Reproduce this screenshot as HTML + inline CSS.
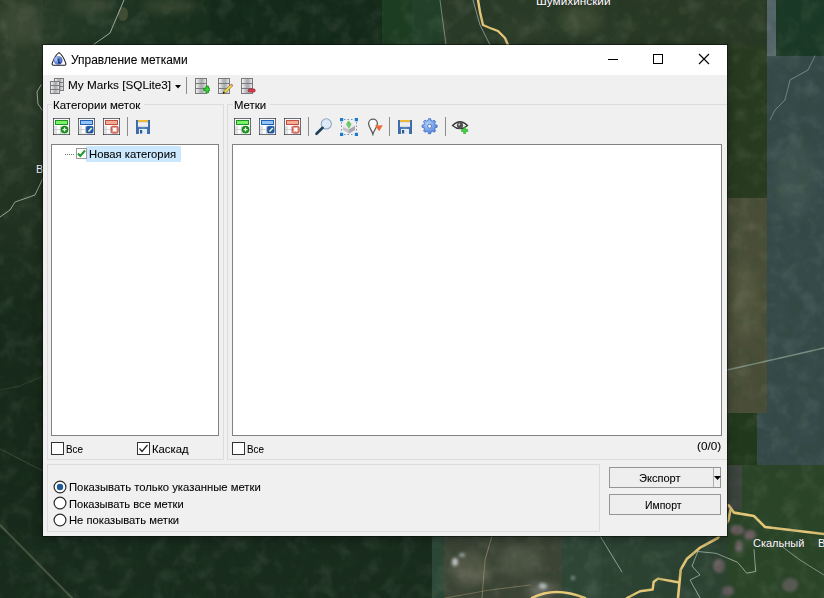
<!DOCTYPE html>
<html><head><meta charset="utf-8">
<style>
*{box-sizing:border-box}
html,body{margin:0;padding:0}
body{width:824px;height:598px;overflow:hidden;position:relative;background:#1d301e;font-family:"Liberation Sans",sans-serif;color:#000}
.a{position:absolute}
.t{position:absolute;white-space:nowrap;line-height:1;font-size:11.2px;color:#000;-webkit-text-stroke:0.08px #000}
.sep{position:absolute;width:1px;background:#8c8c8c}
</style></head><body>
<svg class="a" style="left:0;top:0" width="824" height="598" viewBox="0 0 824 598">
<defs>
<filter id="bl" x="-20%" y="-20%" width="140%" height="140%"><feGaussianBlur stdDeviation="4"/></filter>
<filter id="bl2" x="-50%" y="-50%" width="200%" height="200%"><feGaussianBlur stdDeviation="1.5"/></filter>
</defs>
<rect x="0" y="0" width="824" height="598" fill="#17291a"/>
<!-- top strip tiles -->
<linearGradient id="lgt" x1="0" y1="0" x2="1" y2="0"><stop offset="0" stop-color="#2c3e2a"/><stop offset="0.5" stop-color="#213624"/><stop offset="1" stop-color="#172c1b"/></linearGradient>
<rect x="0" y="0" width="210" height="45" fill="url(#lgt)"/>
<ellipse cx="123" cy="14" rx="5" ry="7" fill="#4a5238" opacity=".8"/>
<rect x="210" y="0" width="172" height="45" fill="#15291a"/>
<rect x="382" y="0" width="30" height="45" fill="#1d3d22"/>
<rect x="412" y="0" width="30" height="45" fill="#22402a"/>
<rect x="442" y="0" width="176" height="45" fill="#2a3a28"/>
<rect x="618" y="0" width="149" height="45" fill="#283824"/>
<rect x="767" y="0" width="9" height="56" fill="#56666a"/>
<rect x="776" y="0" width="48" height="56" fill="#1a3826"/>
<!-- right strip -->
<rect x="727" y="45" width="40" height="153" fill="#283a1f"/>
<rect x="767" y="56" width="57" height="414" fill="#364a4a"/>
<rect x="727" y="198" width="40" height="215" fill="#4a4e38"/>
<rect x="727" y="413" width="30" height="52" fill="#22381c"/>
<rect x="757" y="413" width="10" height="52" fill="#364a4a"/>
<rect x="727" y="465" width="97" height="133" fill="#2a4428"/>
<rect x="727" y="465" width="15" height="45" fill="#3e4440"/>
<!-- left strip -->
<linearGradient id="lgl" x1="0" y1="0" x2="0" y2="1"><stop offset="0" stop-color="#2e3e2a"/><stop offset="0.35" stop-color="#2a3a28"/><stop offset="1" stop-color="#17291a"/></linearGradient>
<rect x="0" y="0" width="43" height="320" fill="url(#lgl)"/>
<!-- bottom strip -->
<rect x="0" y="536" width="432" height="62" fill="#182b1c"/>
<rect x="432" y="536" width="12" height="62" fill="#2c4636"/>
<rect x="444" y="536" width="118" height="62" fill="#3c4436"/>
<rect x="562" y="536" width="40" height="62" fill="#2e4636"/>
<rect x="602" y="536" width="125" height="62" fill="#2c4232"/>
<g filter="url(#bl)">
  <ellipse cx="20" cy="25" rx="22" ry="20" fill="#3a4a34"/>
  <ellipse cx="90" cy="6" rx="22" ry="8" fill="#3a4834"/>
  <ellipse cx="170" cy="6" rx="28" ry="7" fill="#34442e"/>
  <ellipse cx="580" cy="20" rx="22" ry="14" fill="#3a4830"/>
  <ellipse cx="520" cy="30" rx="25" ry="12" fill="#2e3c2a"/>
  <ellipse cx="795" cy="180" rx="20" ry="40" fill="#3e5250"/>
  <ellipse cx="745" cy="300" rx="14" ry="40" fill="#52563e"/>
  <ellipse cx="470" cy="570" rx="20" ry="16" fill="#565a4a"/>
  <ellipse cx="520" cy="560" rx="22" ry="16" fill="#4e5444"/>
  <ellipse cx="540" cy="590" rx="14" ry="8" fill="#5e6258"/>
</g>
<g filter="url(#bl2)">
  <ellipse cx="737" cy="530" rx="7" ry="5" fill="#6a5a5e"/>
  <ellipse cx="750" cy="535" rx="6" ry="5" fill="#6a5a5e"/>
  <ellipse cx="739" cy="546" rx="4" ry="6" fill="#6a5e60"/>
  <ellipse cx="719" cy="566" rx="6" ry="7" fill="#6a5e60"/>
  <ellipse cx="728" cy="591" rx="6" ry="5" fill="#625a5c"/>
  <ellipse cx="790" cy="585" rx="8" ry="7" fill="#5a5a54"/>
  <ellipse cx="455" cy="562" rx="3" ry="4" fill="#b8c0c0"/>
  <ellipse cx="462" cy="555" rx="3" ry="2" fill="#a8b0b0"/>
  <ellipse cx="543" cy="586" rx="4" ry="3" fill="#b0b8b8"/>
  <ellipse cx="573" cy="578" rx="2" ry="2" fill="#a0a8a8"/>
</g>
<g fill="none" stroke-linecap="round" stroke-linejoin="round">
  <path d="M124 0 L110 33 L93 45" stroke="#c8d0c0" stroke-width="0.9" opacity=".85"/>
  <path d="M41 85 L37 92 L38 104 L43 111" stroke="#c8d0c0" stroke-width="0.9" opacity=".85"/>
  <path d="M43 178 L35 195 L15 202 L10 210 L0 217" stroke="#c0c8b8" stroke-width="0.9" opacity=".85"/>
  <path d="M440 0 L446 45" stroke="#98a890" stroke-width="1" opacity=".7"/>
  <path d="M473 0 L480 25 L490 45" stroke="#a8b8c0" stroke-width="0.9" opacity=".8"/>
  <path d="M478 0 L480 12 L483 25 L490 28 L498 31 L505 38 L508 45" stroke="#e8c878" stroke-width="2.4"/>
  <path d="M0 449 L43 471" stroke="#5a6450" stroke-width="0.9" opacity=".6"/>
  <path d="M0 390 L20 386 L43 376" stroke="#4a5840" stroke-width="0.9" opacity=".5"/>
  <path d="M0 525 L72 598" stroke="#4e5844" stroke-width="2.2" opacity=".85"/>
  <path d="M600 536 L622 572" stroke="#b8c8c0" stroke-width="0.9" opacity=".8"/>
  <path d="M728.6 505.4 L734 512.6 L754 516 L765 527 L824 534" stroke="#e8c878" stroke-width="2.6"/>
  <path d="M730.4 510 L728.6 519.8 L717.8 538 L699.7 547.9 L687 558.7 L680.7 569.6 L678 598" stroke="#e8c878" stroke-width="2.6"/>
  <path d="M678 582.2 L658 578.6 L653.6 582 L652.7 589.5 L640 591.3 L627 598" stroke="#e8c878" stroke-width="2.4"/>
  <path d="M532 598 Q555 586 585 598" stroke="#e8c878" stroke-width="2.6"/>
  <path d="M697.9 551.5 L716 553.3 L737.6 562.3 L746.7 573.2 L755.7 571.4 L754 549.7" stroke="#b8c8c0" stroke-width="0.9" opacity=".8"/>
  <path d="M697.9 551.5 L692 566 L700 575 L690 580 L700 598" stroke="#b8c8c0" stroke-width="0.9" opacity=".8"/>
  <path d="M780 545 L800 560 L824 575" stroke="#b8c8c0" stroke-width="0.9" opacity=".7"/>
  <path d="M815 56 L808 70 L790 80 L785 100 L775 110 L770 120" stroke="#809890" stroke-width="1" opacity=".8"/>
  <path d="M727 370 L767 361 L824 348" stroke="#8a9c90" stroke-width="1.5" opacity=".8"/>
  <path d="M492 536 L485 560 L482 598" stroke="#a09070" stroke-width="1" opacity=".7"/>
  <path d="M445 598 L490 590 L530 585" stroke="#a09070" stroke-width="1" opacity=".6"/>
</g>
<filter id="noise" x="0" y="0" width="100%" height="100%"><feTurbulence type="fractalNoise" baseFrequency="0.06" numOctaves="3" seed="7"/><feColorMatrix type="matrix" values="0 0 0 0 0.75  0 0 0 0 0.8  0 0 0 0 0.65  0 0 0 1.6 -0.75"/></filter>
<filter id="noise2" x="0" y="0" width="100%" height="100%"><feTurbulence type="fractalNoise" baseFrequency="0.07" numOctaves="3" seed="23"/><feColorMatrix type="matrix" values="0 0 0 0 0.02  0 0 0 0 0.06  0 0 0 0 0.02  0 0 0 1.6 -0.7"/></filter>
<rect x="0" y="0" width="824" height="598" filter="url(#noise)" opacity="0.14"/>
<rect x="0" y="0" width="824" height="598" filter="url(#noise2)" opacity="0.3"/>
<g font-family="Liberation Sans, sans-serif" font-size="11" fill="#fff" stroke="#222" stroke-width="0.5" paint-order="stroke">
  <text x="536" y="5" font-size="11.8">Шумихинский</text>
  <text x="753" y="547">Скальный</text>
  <text x="818" y="547">В</text>
  <text x="36" y="173">В</text>
</g>
</svg>

<div class="a" style="left:43px;top:45px;width:684px;height:491px;box-shadow:0 2px 10px rgba(0,0,0,.45), 0 0 0 1px rgba(10,20,10,.55)"></div>
<div class="a" style="left:43px;top:45px;width:684px;height:491px;background:#f0f0f0"></div>
<div class="a" style="left:43px;top:45px;width:684px;height:30px;background:#fff"></div>
<svg class="a" style="left:50px;top:50px" width="18" height="18" viewBox="0 0 18 18">
  <defs><radialGradient id="glb" cx="0.3" cy="0.35" r="0.85"><stop offset="0" stop-color="#b8cff0"/><stop offset="0.5" stop-color="#6a8ed8"/><stop offset="1" stop-color="#2040b0"/></radialGradient></defs>
  <path d="M9 2.6 Q13 5 15.8 13.4 Q16.2 15.3 14.6 15.3 L3.4 15.3 Q1.8 15.3 2.2 13.4 Q5 5 9 2.6 Z" fill="#fff" stroke="#1a1a1a" stroke-width="1.1" stroke-linejoin="round"/>
  <circle cx="8.1" cy="10.4" r="4.4" fill="url(#glb)"/>
  <path d="M7.4 8.6 h2.4 l-0.5 2.4 l1.5 2.4 h-2.6z" fill="#0c1e6a" opacity=".8"/>
  <path d="M10.5 7.2 L12.5 9" stroke="#70a870" stroke-width="0.8" opacity=".7"/>
</svg>
<div class="t" style="left:71.30px;top:53.74px;font-size:12px;transform:scaleX(0.9954);transform-origin:0 0;">Управление метками</div>
<div class="a" style="left:608px;top:59px;width:10px;height:1px;background:#000"></div>
<div class="a" style="left:653px;top:54px;width:10px;height:10px;border:1px solid #000"></div>
<svg class="a" style="left:698px;top:53px" width="12" height="12" viewBox="0 0 12 12"><path d="M1 1 L11 11 M11 1 L1 11" stroke="#000" stroke-width="1.1"/></svg>
<svg width="0" height="0" style="position:absolute"><defs>
<linearGradient id="gdb" x1="0" y1="0" x2="1" y2="0"><stop offset="0" stop-color="#fafafa"/><stop offset="0.45" stop-color="#b4b4b8"/><stop offset="0.6" stop-color="#a8acb0"/><stop offset="1" stop-color="#f0f0f0"/></linearGradient>
<linearGradient id="gfl" x1="0" y1="0" x2="1" y2="0"><stop offset="0" stop-color="#3a68a8"/><stop offset="0.5" stop-color="#5a88c0"/><stop offset="1" stop-color="#3a68a8"/></linearGradient>
</defs></svg>
<svg class="a" style="left:48px;top:76px" width="18" height="18" viewBox="0 0 18 18"><rect x="6.5" y="2.5" width="9" height="4" fill="url(#gdb)" stroke="#7a7a7a" stroke-width="1"/><rect x="6.5" y="6.5" width="9" height="4" fill="url(#gdb)" stroke="#7a7a7a" stroke-width="1"/><rect x="6.5" y="10.5" width="9" height="4" fill="url(#gdb)" stroke="#7a7a7a" stroke-width="1"/><rect x="2.5" y="5.5" width="9" height="4" fill="url(#gdb)" stroke="#7a7a7a" stroke-width="1"/><rect x="2.5" y="9.5" width="9" height="4" fill="url(#gdb)" stroke="#7a7a7a" stroke-width="1"/><rect x="2.5" y="13.5" width="9" height="4" fill="url(#gdb)" stroke="#7a7a7a" stroke-width="1"/></svg>
<div class="t" style="left:68.30px;top:80.35px;font-size:11.4px;transform:scaleX(1.0311);transform-origin:0 0;">My Marks [SQLite3]</div>
<svg class="a" style="left:175px;top:85px" width="6" height="4" viewBox="0 0 6 4"><path d="M0 0 H6 L3 3.5Z" fill="#000"/></svg>
<div class="sep" style="left:186px;top:77px;height:17px"></div>
<svg class="a" style="left:194px;top:77px" width="16" height="17" viewBox="0 0 16 17"><rect x="1.5" y="1.5" width="11" height="5" fill="url(#gdb)" stroke="#7a7a7a" stroke-width="1"/><rect x="1.5" y="6.5" width="11" height="5" fill="url(#gdb)" stroke="#7a7a7a" stroke-width="1"/><rect x="1.5" y="11.5" width="11" height="5" fill="url(#gdb)" stroke="#7a7a7a" stroke-width="1"/><path d="M9.8 11.2h2.2v-2.2h2.4v2.2h2.2v2.4h-2.2v2.2h-2.4v-2.2h-2.2z" fill="#3ed23e" stroke="#149014" stroke-width="0.9" stroke-linejoin="round"/></svg>
<svg class="a" style="left:217px;top:77px" width="17" height="17" viewBox="0 0 17 17"><rect x="1.5" y="1.5" width="11" height="5" fill="url(#gdb)" stroke="#7a7a7a" stroke-width="1"/><rect x="1.5" y="6.5" width="11" height="5" fill="url(#gdb)" stroke="#7a7a7a" stroke-width="1"/><rect x="1.5" y="11.5" width="11" height="5" fill="url(#gdb)" stroke="#7a7a7a" stroke-width="1"/><path d="M6.4 16.4 L7.2 13.6 L14.2 7.2 L15.8 8.8 L8.8 15.6 Z" fill="#f0d858" stroke="#8a7020" stroke-width="0.7"/><path d="M14.2 7.2 L15.8 8.8" stroke="#e07070" stroke-width="1.6"/><path d="M6.4 16.4 L7.2 15.2" stroke="#000" stroke-width="1.2"/></svg>
<svg class="a" style="left:240px;top:77px" width="16" height="17" viewBox="0 0 16 17"><rect x="1.5" y="1.5" width="11" height="5" fill="url(#gdb)" stroke="#7a7a7a" stroke-width="1"/><rect x="1.5" y="6.5" width="11" height="5" fill="url(#gdb)" stroke="#7a7a7a" stroke-width="1"/><rect x="1.5" y="11.5" width="11" height="5" fill="url(#gdb)" stroke="#7a7a7a" stroke-width="1"/><rect x="8.3" y="12" width="6.8" height="3" rx="1.2" fill="#d84050" stroke="#a01828" stroke-width="0.8"/></svg>
<div class="a" style="left:47px;top:104px;width:177px;height:356px;border:1px solid #dcdcdc"></div>
<div class="a" style="left:227px;top:104px;width:500px;height:356px;border:1px solid #dcdcdc;border-right:none"></div>
<div class="a" style="left:52px;top:100px;width:92px;height:12px;background:#f0f0f0"></div>
<div class="a" style="left:233px;top:100px;width:37px;height:12px;background:#f0f0f0"></div>
<div class="t" style="left:52.50px;top:99.86px;font-size:10.8px;transform:scaleX(1.0618);transform-origin:0 0;">Категории меток</div>
<div class="t" style="left:233.90px;top:99.56px;font-size:10.8px;transform:scaleX(1.0540);transform-origin:0 0;">Метки</div>
<svg class="a" style="left:53px;top:118px" width="17" height="17" viewBox="0 0 17 17"><rect x="0.5" y="0.5" width="16" height="16" fill="#fff" stroke="#1a1a1a"/><rect x="1" y="1" width="15" height="15" fill="none" stroke="#e4eef8" stroke-width="0.8"/><rect x="1" y="8" width="3" height="8" fill="#e2e2e2"/><path d="M1 11.5h7 M7.5 8v8" stroke="#c8c8c8" stroke-width="0.8"/><rect x="2.5" y="2.5" width="12" height="4" fill="#7cf068" stroke="#1e961e" stroke-width="1"/><rect x="8" y="8" width="8" height="8" fill="#d8f5d0"/><circle cx="11.5" cy="11.6" r="3.5" fill="#16901e" stroke="#0a6a10" stroke-width="0.6"/><path d="M11.5 9.6v4 M9.5 11.6h4" stroke="#e8ffe0" stroke-width="1.3"/></svg>
<svg class="a" style="left:78px;top:118px" width="17" height="17" viewBox="0 0 17 17"><rect x="0.5" y="0.5" width="16" height="16" fill="#fff" stroke="#1a1a1a"/><rect x="1" y="1" width="15" height="15" fill="none" stroke="#e4eef8" stroke-width="0.8"/><rect x="1" y="8" width="3" height="8" fill="#e2e2e2"/><path d="M1 11.5h7 M7.5 8v8" stroke="#c8c8c8" stroke-width="0.8"/><rect x="2.5" y="2.5" width="12" height="4" fill="#94c4f4" stroke="#2060b8" stroke-width="1"/><rect x="8.3" y="8.3" width="6.8" height="6.8" rx="1.4" fill="#1a5cb0" stroke="#0e4090" stroke-width="0.6"/><path d="M10 14 L13.8 10" stroke="#f4f8c0" stroke-width="1.6"/><path d="M9.6 14.4 L10.4 13.6" stroke="#000" stroke-width="1.3"/></svg>
<svg class="a" style="left:103px;top:118px" width="17" height="17" viewBox="0 0 17 17"><rect x="0.5" y="0.5" width="16" height="16" fill="#fff" stroke="#1a1a1a"/><rect x="1" y="1" width="15" height="15" fill="none" stroke="#e4eef8" stroke-width="0.8"/><rect x="1" y="8" width="3" height="8" fill="#e2e2e2"/><path d="M1 11.5h7 M7.5 8v8" stroke="#c8c8c8" stroke-width="0.8"/><rect x="2.5" y="2.5" width="12" height="4" fill="#f4ac94" stroke="#c05040" stroke-width="1"/><rect x="8.3" y="8.3" width="6.8" height="6.8" rx="1.4" fill="#ec9484" stroke="#c04838" stroke-width="1"/><path d="M10.2 10.2 L13.2 13.2 M13.2 10.2 L10.2 13.2" stroke="#fff" stroke-width="1.8"/></svg>
<svg class="a" style="left:234px;top:118px" width="17" height="17" viewBox="0 0 17 17"><rect x="0.5" y="0.5" width="16" height="16" fill="#fff" stroke="#1a1a1a"/><rect x="1" y="1" width="15" height="15" fill="none" stroke="#e4eef8" stroke-width="0.8"/><rect x="1" y="8" width="3" height="8" fill="#e2e2e2"/><path d="M1 11.5h7 M7.5 8v8" stroke="#c8c8c8" stroke-width="0.8"/><rect x="2.5" y="2.5" width="12" height="4" fill="#7cf068" stroke="#1e961e" stroke-width="1"/><rect x="8" y="8" width="8" height="8" fill="#d8f5d0"/><circle cx="11.5" cy="11.6" r="3.5" fill="#16901e" stroke="#0a6a10" stroke-width="0.6"/><path d="M11.5 9.6v4 M9.5 11.6h4" stroke="#e8ffe0" stroke-width="1.3"/></svg>
<svg class="a" style="left:259px;top:118px" width="17" height="17" viewBox="0 0 17 17"><rect x="0.5" y="0.5" width="16" height="16" fill="#fff" stroke="#1a1a1a"/><rect x="1" y="1" width="15" height="15" fill="none" stroke="#e4eef8" stroke-width="0.8"/><rect x="1" y="8" width="3" height="8" fill="#e2e2e2"/><path d="M1 11.5h7 M7.5 8v8" stroke="#c8c8c8" stroke-width="0.8"/><rect x="2.5" y="2.5" width="12" height="4" fill="#94c4f4" stroke="#2060b8" stroke-width="1"/><rect x="8.3" y="8.3" width="6.8" height="6.8" rx="1.4" fill="#1a5cb0" stroke="#0e4090" stroke-width="0.6"/><path d="M10 14 L13.8 10" stroke="#f4f8c0" stroke-width="1.6"/><path d="M9.6 14.4 L10.4 13.6" stroke="#000" stroke-width="1.3"/></svg>
<svg class="a" style="left:284px;top:118px" width="17" height="17" viewBox="0 0 17 17"><rect x="0.5" y="0.5" width="16" height="16" fill="#fff" stroke="#1a1a1a"/><rect x="1" y="1" width="15" height="15" fill="none" stroke="#e4eef8" stroke-width="0.8"/><rect x="1" y="8" width="3" height="8" fill="#e2e2e2"/><path d="M1 11.5h7 M7.5 8v8" stroke="#c8c8c8" stroke-width="0.8"/><rect x="2.5" y="2.5" width="12" height="4" fill="#f4ac94" stroke="#c05040" stroke-width="1"/><rect x="8.3" y="8.3" width="6.8" height="6.8" rx="1.4" fill="#ec9484" stroke="#c04838" stroke-width="1"/><path d="M10.2 10.2 L13.2 13.2 M13.2 10.2 L10.2 13.2" stroke="#fff" stroke-width="1.8"/></svg>
<div class="sep" style="left:127px;top:117px;height:19px"></div>
<svg class="a" style="left:135px;top:119px" width="16" height="16" viewBox="0 0 16 16"><path d="M1 1h14v14H1z" fill="url(#gfl)"/><rect x="3" y="1" width="10" height="2.2" fill="#eeb838"/><rect x="3" y="3.2" width="10" height="4.6" fill="#eef4fa"/><path d="M4 5h8 M4 6.5h8" stroke="#f0d8c8" stroke-width="0.5"/><rect x="4" y="10" width="8" height="5" fill="#e4ecf4"/><rect x="5" y="11" width="2.2" height="3.5" fill="#2e5a90"/></svg>
<div class="sep" style="left:308px;top:117px;height:19px"></div>
<svg class="a" style="left:314px;top:117px" width="18" height="19" viewBox="0 0 18 19"><circle cx="12.3" cy="6.9" r="5.1" fill="#dde9f5" stroke="#90a8c0" stroke-width="1.1"/><path d="M8.6 10.8 L2.5 16.8" stroke="#1c3f5a" stroke-width="2.6" stroke-linecap="round"/></svg>
<svg class="a" style="left:339px;top:117px" width="20" height="20" viewBox="0 0 20 20"><path d="M4 10 L9 6.5 L16 9 L16 13 L10 16.5 L4 13Z" fill="#c4c4c8"/><path d="M4 10 L9 6.5 L16 9 L10 12.5Z" fill="#ececec"/><path d="M10 12.5 L16 9 L16 13 L10 16.5Z" fill="#a8a8b0"/><path d="M9.5 3.5 L12.5 7 L10 12 L7 7Z" fill="#6cc86c"/><path d="M5 2.5H15 M5 17.5H15 M2.5 5V15 M17.5 5V15" stroke="#7890b0" stroke-width="1" stroke-dasharray="1.5 2"/><rect x="1" y="1" width="3.2" height="3.2" fill="#1a7ad0"/><rect x="15.8" y="1" width="3.2" height="3.2" fill="#1a7ad0"/><rect x="1" y="15.8" width="3.2" height="3.2" fill="#1a7ad0"/><rect x="15.8" y="15.8" width="3.2" height="3.2" fill="#1a7ad0"/></svg>
<svg class="a" style="left:367px;top:117px" width="17" height="19" viewBox="0 0 17 19"><path d="M5.9 17.3 C4.6 12.5 1.6 10 1.6 6.6 A4.4 4.4 0 0 1 10.4 6.6 C10.4 10 7.2 12.5 5.9 17.3Z" fill="#fafafa" stroke="#5e5e5e" stroke-width="1.3"/><path d="M8 8.6 L15.8 8.2 L12.2 14.2 Z" fill="#f06a35"/></svg>
<div class="sep" style="left:389px;top:117px;height:19px"></div>
<svg class="a" style="left:397px;top:119px" width="16" height="16" viewBox="0 0 16 16"><path d="M1 1h14v14H1z" fill="url(#gfl)"/><rect x="3" y="1" width="10" height="2.2" fill="#eeb838"/><rect x="3" y="3.2" width="10" height="4.6" fill="#eef4fa"/><path d="M4 5h8 M4 6.5h8" stroke="#f0d8c8" stroke-width="0.5"/><rect x="4" y="10" width="8" height="5" fill="#e4ecf4"/><rect x="5" y="11" width="2.2" height="3.5" fill="#2e5a90"/></svg>
<svg class="a" style="left:420px;top:117px" width="19" height="19" viewBox="0 0 19 19"><defs><radialGradient id="ggr" cx="0.4" cy="0.35" r="0.7"><stop offset="0" stop-color="#b8d4f8"/><stop offset="1" stop-color="#4a7ed8"/></radialGradient></defs><g transform="translate(9.6 9.2)"><path d="M5.71 -1.47 L7.52 -1.07 L7.52 1.07 L5.71 1.47 L5.08 3.00 L6.08 4.56 L4.56 6.08 L3.00 5.08 L1.47 5.71 L1.07 7.52 L-1.07 7.52 L-1.47 5.71 L-3.00 5.08 L-4.56 6.08 L-6.08 4.56 L-5.08 3.00 L-5.71 1.47 L-7.52 1.07 L-7.52 -1.07 L-5.71 -1.47 L-5.08 -3.00 L-6.08 -4.56 L-4.56 -6.08 L-3.00 -5.08 L-1.47 -5.71 L-1.07 -7.52 L1.07 -7.52 L1.47 -5.71 L3.00 -5.08 L4.56 -6.08 L6.08 -4.56 L5.08 -3.00Z" fill="url(#ggr)" stroke="#3a6ac8" stroke-width="0.8" stroke-linejoin="round"/><circle r="2" fill="#f0f0f0" stroke="#3a6ac8" stroke-width="0.8"/></g></svg>
<div class="sep" style="left:445px;top:117px;height:19px"></div>
<svg class="a" style="left:451px;top:118px" width="18" height="17" viewBox="0 0 18 17"><path d="M1.5 7.5 Q9 0 16.5 7.5 Q9 14 1.5 7.5Z" fill="#f4f4f4" stroke="#3a3a3a" stroke-width="1.2"/><circle cx="9" cy="7.3" r="3.1" fill="#505050"/><circle cx="8.2" cy="6.4" r="1" fill="#d0d0d0"/><path d="M12.6 9.3h2.1v2.1h2.1v2.1h-2.1v2.1h-2.1v-2.1h-2.1v-2.1h2.1z" fill="#3ed23e" stroke="#189818" stroke-width="0.5"/></svg>
<div class="a" style="left:51px;top:144px;width:168px;height:292px;background:#fff;border:1px solid #828282"></div>
<div class="a" style="left:232px;top:144px;width:490px;height:292px;background:#fff;border:1px solid #828282"></div>
<div class="a" style="left:65px;top:154px;width:10px;height:1px;background-image:linear-gradient(90deg,#777 1px,transparent 1px);background-size:2px 1px"></div>
<div class="a" style="left:86px;top:146px;width:95px;height:16px;background:#cce8ff"></div>
<svg class="a" style="left:76px;top:148px" width="11" height="11" viewBox="0 0 11 11"><rect x="0.5" y="0.5" width="10" height="10" fill="#fff" stroke="#9a9a9a"/><path d="M2 5.5 L4.3 8 L9 2.5" fill="none" stroke="#1f9a2a" stroke-width="2"/></svg>
<div class="t" style="left:88.90px;top:149.06px;font-size:10.8px;transform:scaleX(1.0433);transform-origin:0 0;">Новая категория</div>
<svg class="a" style="left:51px;top:442px" width="13" height="13" viewBox="0 0 13 13"><rect x="0.5" y="0.5" width="12" height="12" fill="#fff" stroke="#333"/></svg>
<div class="t" style="left:66.20px;top:443.86px;font-size:10.8px;transform:scaleX(0.9098);transform-origin:0 0;">Все</div>
<svg class="a" style="left:137px;top:442px" width="13" height="13" viewBox="0 0 13 13"><rect x="0.5" y="0.5" width="12" height="12" fill="#fff" stroke="#333"/><path d="M2.5 6.5 L5 9.5 L10.5 3" fill="none" stroke="#222" stroke-width="1.2"/></svg>
<div class="t" style="left:152.00px;top:443.86px;font-size:10.8px;transform:scaleX(1.0460);transform-origin:0 0;">Каскад</div>
<svg class="a" style="left:232px;top:442px" width="13" height="13" viewBox="0 0 13 13"><rect x="0.5" y="0.5" width="12" height="12" fill="#fff" stroke="#333"/></svg>
<div class="t" style="left:247.20px;top:443.86px;font-size:10.8px;transform:scaleX(0.9098);transform-origin:0 0;">Все</div>
<div class="t" style="left:696.80px;top:441.36px;font-size:10.8px;transform:scaleX(1.0877);transform-origin:0 0;">(0/0)</div>
<div class="a" style="left:47px;top:464px;width:553px;height:68px;border:1px solid #dcdcdc"></div>
<svg class="a" style="left:53.3px;top:479.5px" width="14" height="14" viewBox="0 0 14 14"><circle cx="7" cy="7" r="5.9" fill="#fff" stroke="#2a2a2a" stroke-width="1.2"/><circle cx="7" cy="7" r="3.2" fill="#1f5a96"/></svg>
<div class="t" style="left:69.30px;top:481.86px;font-size:10.8px;transform:scaleX(1.0464);transform-origin:0 0;">Показывать только указанные метки</div>
<svg class="a" style="left:53.3px;top:496.4px" width="14" height="14" viewBox="0 0 14 14"><circle cx="7" cy="7" r="5.9" fill="#fff" stroke="#2a2a2a" stroke-width="1.2"/></svg>
<div class="t" style="left:69.30px;top:498.66px;font-size:10.8px;transform:scaleX(1.0321);transform-origin:0 0;">Показывать все метки</div>
<svg class="a" style="left:53.3px;top:513.2px" width="14" height="14" viewBox="0 0 14 14"><circle cx="7" cy="7" r="5.9" fill="#fff" stroke="#2a2a2a" stroke-width="1.2"/></svg>
<div class="t" style="left:69.30px;top:515.16px;font-size:10.8px;transform:scaleX(1.0392);transform-origin:0 0;">Не показывать метки</div>
<div class="a" style="left:609px;top:467px;width:112px;height:21px;background:#eeeeee;border:1px solid #959595"></div>
<div class="a" style="left:713px;top:468px;width:1px;height:19px;background:#adadad"></div>
<svg class="a" style="left:714px;top:476px" width="7" height="5" viewBox="0 0 7 5"><path d="M0 0H7L3.5 4Z" fill="#000"/></svg>
<div class="t" style="left:639.20px;top:472.86px;font-size:10.8px;transform:scaleX(1.0244);transform-origin:0 0;">Экспорт</div>
<div class="a" style="left:609px;top:494px;width:112px;height:21px;background:#eeeeee;border:1px solid #959595"></div>
<div class="t" style="left:644.90px;top:499.56px;font-size:10.8px;transform:scaleX(0.9683);transform-origin:0 0;">Импорт</div>
</body></html>
